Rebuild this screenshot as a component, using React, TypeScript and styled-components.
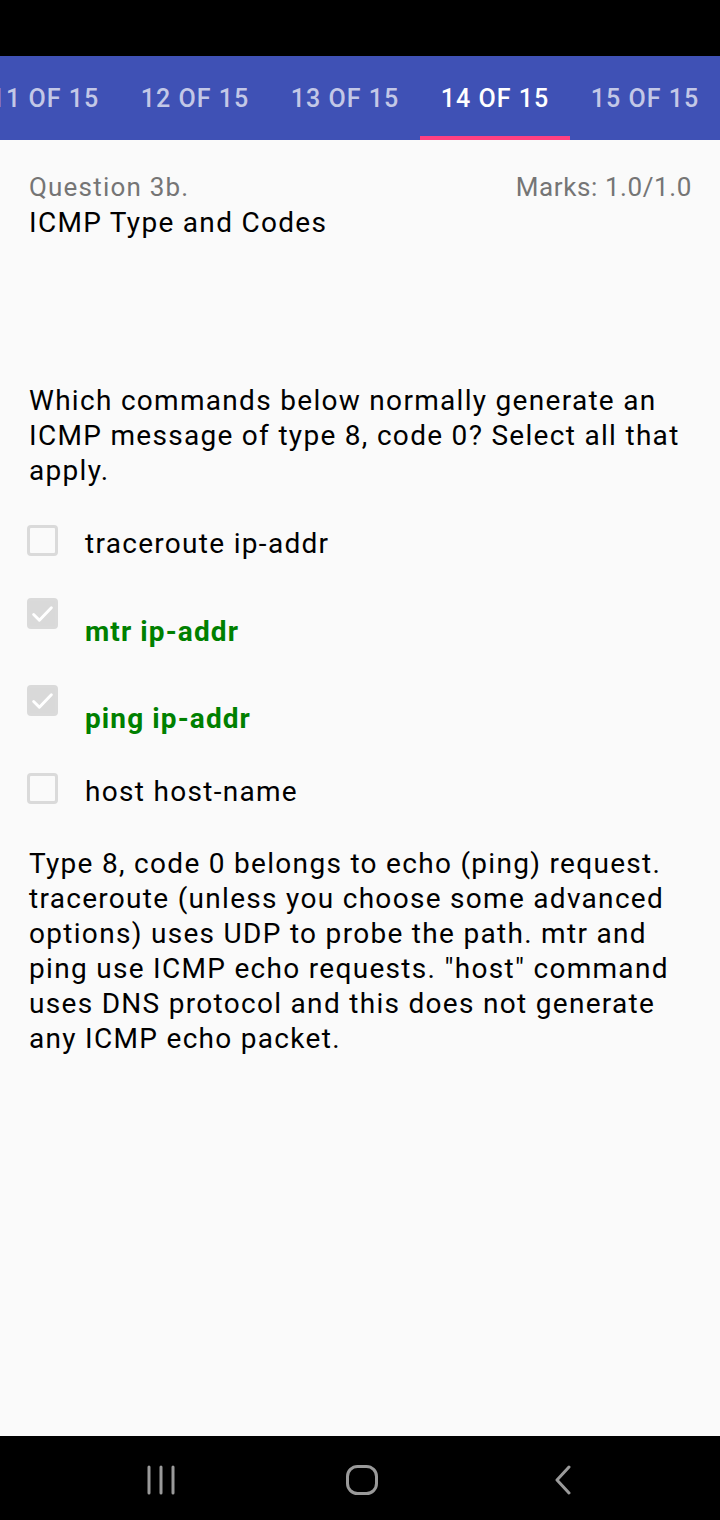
import React from "react";
import styled, { createGlobalStyle } from "styled-components";

const Global = createGlobalStyle`
  html, body { margin: 0; padding: 0; background: #000; }
  body { font-family: Roboto, "Noto Sans", sans-serif; -webkit-font-smoothing: antialiased; }
  * { box-sizing: border-box; }
`;

const Screen = styled.div`
  width: 720px;
  height: 1520px;
  display: flex;
  flex-direction: column;
  background: #fafafa;
  overflow: hidden;
`;

const StatusBar = styled.div`
  height: 56px;
  flex: none;
  background: #000;
`;

const TabBar = styled.div`
  height: 84px;
  flex: none;
  background: #3f51b5;
  display: flex;
  margin-left: -30px;
`;

const Tab = styled.div<{ $active?: boolean }>`
  width: 150px;
  flex: none;
  position: relative;
  display: flex;
  align-items: center;
  justify-content: center;
  padding-top: 1px;
  font-family: Roboto, sans-serif;
  font-weight: 500;
  font-size: 25px;
  letter-spacing: 1px;
  white-space: nowrap;
  color: ${(p) => (p.$active ? "#ffffff" : "rgba(255,255,255,0.7)")};
  &::after {
    content: "";
    display: ${(p) => (p.$active ? "block" : "none")};
    position: absolute;
    left: 0;
    right: 0;
    bottom: 0;
    height: 4px;
    background: #ff4081;
  }
`;

const Content = styled.div`
  flex: 1;
  padding: 30px 28px 0 29px;
  display: flex;
  flex-direction: column;
`;

const HeaderRow = styled.div`
  display: flex;
  justify-content: space-between;
  align-items: flex-start;
`;

const Subtle = styled.div<{ $spacing?: number }>`
  font-size: 26px;
  line-height: 35px;
  letter-spacing: ${(p) => p.$spacing ?? 1}px;
  color: #757575;
`;

const Text = styled.div`
  font-size: 28px;
  line-height: 35px;
  letter-spacing: 1.3px;
  color: #000;
`;

const Question = styled(Text)`
  margin-top: 143px;
`;

const Options = styled.div`
  display: flex;
  flex-direction: column;
  margin-top: 37px;
  margin-left: -2px;
`;

const OptionRow = styled.div<{ $checked?: boolean }>`
  display: flex;
  align-items: flex-start;
  gap: 27px;
  margin-bottom: ${(p) => (p.$checked ? "37px" : "38px")};
`;

const Box = styled.div<{ $checked?: boolean }>`
  width: 31px;
  height: 31px;
  flex: none;
  border-radius: 4px;
  border: 3px solid #dadada;
  background: ${(p) => (p.$checked ? "#d9d9d9" : "transparent")};
  display: flex;
  align-items: center;
  justify-content: center;
  margin-top: ${(p) => (p.$checked ? "-1px" : "0")};
`;

const Label = styled(Text)<{ $checked?: boolean }>`
  margin-top: ${(p) => (p.$checked ? "15px" : "1px")};
  font-weight: ${(p) => (p.$checked ? 700 : 400)};
  letter-spacing: ${(p) => (p.$checked ? "1.1px" : "1.3px")};
  color: ${(p) => (p.$checked ? "#008000" : "#000")};
`;

const Explanation = styled(Text)`
  margin-top: -1px;
`;

const NavBar = styled.div`
  height: 84px;
  flex: none;
  background: #000;
  display: flex;
  align-items: center;
  padding: 4px 0 0 60px;
`;

const NavBtn = styled.div`
  width: 201px;
  display: flex;
  justify-content: center;
`;

const Check = () => (
  <svg width="26" height="26" viewBox="0 0 24 24">
    <path d="M3.5 12.5l5.5 5.5L20.5 6" fill="none" stroke="#fff" strokeWidth="2.8" strokeLinecap="round" strokeLinejoin="round" />
  </svg>
);

const options = [
  { text: "traceroute ip-addr", checked: false },
  { text: "mtr ip-addr", checked: true },
  { text: "ping ip-addr", checked: true },
  { text: "host host-name", checked: false },
];

export default function App() {
  return (
    <Screen>
      <Global />
      <StatusBar />
      <TabBar>
        {["11 OF 15", "12 OF 15", "13 OF 15", "14 OF 15", "15 OF 15"].map((t) => (
          <Tab key={t} $active={t === "14 OF 15"}>{t}</Tab>
        ))}
      </TabBar>
      <Content>
        <HeaderRow>
          <Subtle $spacing={1.2}>Question 3b.</Subtle>
          <Subtle $spacing={0.6}>Marks: 1.0/1.0</Subtle>
        </HeaderRow>
        <Text>ICMP Type and Codes</Text>
        <Question>
          Which commands below normally generate an ICMP message of type 8, code 0? Select all that apply.
        </Question>
        <Options>
          {options.map((o) => (
            <OptionRow key={o.text} $checked={o.checked}>
              <Box $checked={o.checked}>{o.checked && <Check />}</Box>
              <Label $checked={o.checked}>{o.text}</Label>
            </OptionRow>
          ))}
        </Options>
        <Explanation>
          Type 8, code 0 belongs to echo (ping) request. traceroute (unless you choose some advanced options) uses UDP to probe the path. mtr and ping use ICMP echo requests. "host" command uses DNS protocol and this does not generate any ICMP echo packet.
        </Explanation>
      </Content>
      <NavBar>
        <NavBtn>
          <svg width="30" height="30" viewBox="0 0 30 30">
            <g stroke="#9a9a9a" strokeWidth="3" strokeLinecap="round">
              <line x1="3" y1="2" x2="3" y2="28" />
              <line x1="15" y1="2" x2="15" y2="28" />
              <line x1="27" y1="2" x2="27" y2="28" />
            </g>
          </svg>
        </NavBtn>
        <NavBtn>
          <svg width="32" height="30" viewBox="0 0 32 30">
            <rect x="1.5" y="1.5" width="29" height="27" rx="10" fill="none" stroke="#9a9a9a" strokeWidth="3" />
          </svg>
        </NavBtn>
        <NavBtn>
          <svg width="18" height="30" viewBox="0 0 18 30">
            <polyline points="15,2 3,15 15,28" fill="none" stroke="#9a9a9a" strokeWidth="3" strokeLinecap="round" strokeLinejoin="round" />
          </svg>
        </NavBtn>
      </NavBar>
    </Screen>
  );
}
